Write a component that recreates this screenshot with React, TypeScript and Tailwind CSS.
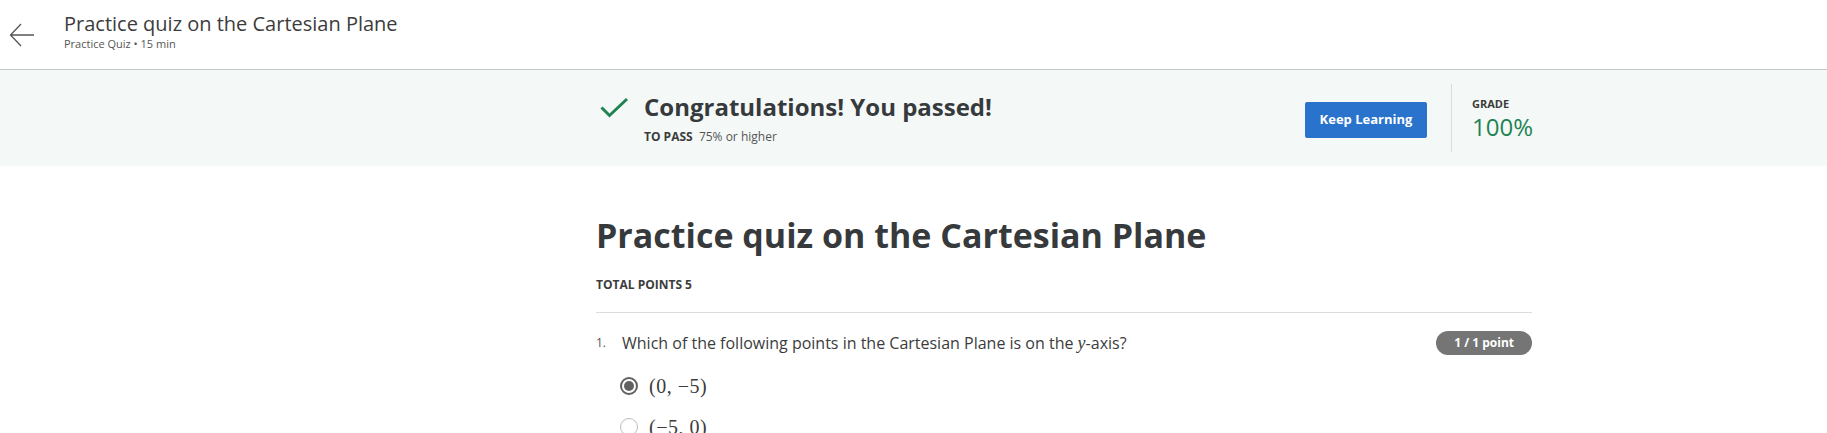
const font = { fontFamily: '"Open Sans", "Liberation Sans", sans-serif' };
const math = { fontFamily: '"Liberation Serif", "DejaVu Serif", serif' };

function Header() {
  return (
    <header className="flex h-[70px] items-center border-b border-[#c8c8c8] bg-white">
      <button className="ml-[8px] flex h-[28px] w-[28px] items-center justify-center text-[#555]">
        <svg width="26" height="26" viewBox="0 0 26 26" fill="none" stroke="currentColor" strokeWidth="1.3">
          <path d="M25 13H2M12 2L1.5 13L12 24" />
        </svg>
      </button>
      <div className="ml-[28px] -mt-[8px] flex flex-col">
        <h2 className="text-[20px] leading-[26px] text-[#3c3c3c]">Practice quiz on the Cartesian Plane</h2>
        <p className="text-[11px] leading-[14px] text-[#555]">Practice Quiz • 15 min</p>
      </div>
    </header>
  );
}

function Banner() {
  return (
    <section className="h-[96px] bg-[#f4f9f8]">
      <div className="ml-[596px] flex h-full w-[936px] items-center">
        <svg width="32" height="24" viewBox="0 0 32 24" fill="none" stroke="#1f8354" strokeWidth="3" className="ml-[4px] -mt-[20px]">
          <path d="M1.5 11.5L9.5 19.5L27 3" />
        </svg>
        <div className="ml-[12px] flex flex-col">
          <h3 className="text-[24px] font-bold leading-[30px] text-[#373a3c]">Congratulations! You passed!</h3>
          <p className="mt-[7px] text-[12px] leading-[16px] text-[#3c3c3c]">
            <span className="font-bold">TO PASS</span>&nbsp; <span className="text-[#555]">75% or higher</span>
          </p>
        </div>
        <div className="ml-auto flex h-full items-center">
          <button className="mt-[3px] h-[36px] w-[122px] rounded-[2px] bg-[#2a73cc] text-[13px] font-bold text-white">
            Keep Learning
          </button>
          <div className="ml-[24px] flex h-[68px] items-start border-l border-[#dcdcdc] pl-[20px] pt-[13px]">
            <div className="flex w-[60px] flex-col">
              <span className="text-[11px] font-bold leading-[14px] text-[#3c3c3c]">GRADE</span>
              <span className="mt-[2px] text-[24px] leading-[28px] text-[#1f8354]">100%</span>
            </div>
          </div>
        </div>
      </div>
    </section>
  );
}

function Radio({ checked }: { checked?: boolean }) {
  return (
    <span
      className={
        checked
          ? 'flex h-[18px] w-[18px] items-center justify-center rounded-full border-2 border-[#616161]'
          : 'flex h-[18px] w-[18px] items-center justify-center rounded-full border border-[#bdbdbd]'
      }
    >
      {checked && <span className="h-[10px] w-[10px] rounded-full bg-[#616161]" />}
    </span>
  );
}

export default function App() {
  const options = [
    { label: '(0, −5)', checked: true },
    { label: '(−5, 0)', checked: false },
  ];
  return (
    <div className="min-h-[433px] bg-white" style={font}>
      <Header />
      <Banner />
      <main className="ml-[596px] w-[936px]">
        <h1 className="mt-[46px] text-[34px] font-bold leading-[46px] text-[#373a3c]">
          Practice quiz on the Cartesian Plane
        </h1>
        <p className="mt-[19px] text-[12px] font-bold leading-[16px] text-[#3c3c3c]">TOTAL POINTS 5</p>
        <hr className="mt-[19px] border-[#dcdcdc]" />
        <div className="mt-[18px] flex items-start">
          <span className="mt-[2px] w-[26px] text-[12px] leading-[20px] text-[#555]">1.</span>
          <p className="text-[16px] leading-[24px] text-[#3c3c3c]">
            Which of the following points in the Cartesian Plane is on the{' '}
            <span className="text-[18px] italic" style={math}>y</span>-axis?
          </p>
          <span className="ml-auto rounded-full bg-[#757575] px-[18px] text-[12px] font-bold leading-[24px] text-white">
            1 / 1 point
          </span>
        </div>
        <div className="mt-[20px] flex flex-col gap-[19px] pl-[24px]">
          {options.map((o) => (
            <label key={o.label} className="flex items-center gap-[11px]">
              <Radio checked={o.checked} />
              <span className="text-[20px] leading-[22px] tracking-[0.5px] text-[#3c3c3c]" style={math}>
                {o.label}
              </span>
            </label>
          ))}
        </div>
      </main>
    </div>
  );
}
